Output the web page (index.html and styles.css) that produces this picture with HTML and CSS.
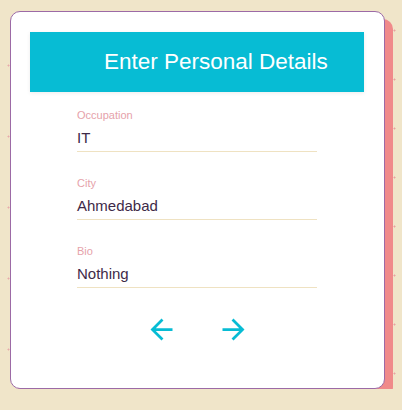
FILE: index.html
```html
<!DOCTYPE html>
<html lang="en">
<head>
<meta charset="utf-8">
<title>Enter Personal Details</title>
<link rel="stylesheet" href="styles.css">
</head>
<body>
<div class="card">
  <div class="header">Enter Personal Details</div>
  <div class="fields">
    <div class="field">
      <div class="label">Occupation</div>
      <div class="value">IT</div>
    </div>
    <div class="field">
      <div class="label">City</div>
      <div class="value">Ahmedabad</div>
    </div>
    <div class="field">
      <div class="label">Bio</div>
      <div class="value">Nothing</div>
    </div>
  </div>
  <div class="nav">
    <svg class="icon" viewBox="0 0 24 24"><path d="M20 11H7.83l5.59-5.59L12 4l-8 8 8 8 1.41-1.41L7.83 13H20v-2z"/></svg>
    <svg class="icon" viewBox="0 0 24 24"><path d="M12 4l-1.41 1.41L16.17 11H4v2h12.17l-5.58 5.59L12 20l8-8z"/></svg>
  </div>
</div>
</body>
</html>
```
FILE: styles.css
```css
html {
  background-color: #f0e5c9;
  background-image:
    radial-gradient(circle, #e8a0a0 0.8px, transparent 1.2px),
    radial-gradient(circle, #e8aaaa 0.8px, transparent 1.2px);
  background-size: 57px 49px, 83px 71px;
  background-position: 24px 6px, 50px 30px;
}
body {
  margin: 0;
  padding: 11px 0 0 10px;
  font-family: "Liberation Sans", Arial, sans-serif;
}
.card {
  box-sizing: border-box;
  width: 375px;
  height: 378px;
  background: #ffffff;
  border: 1px solid #9c6aa6;
  border-radius: 10px;
  box-shadow: 8px 8px 0 #f08a8a;
  padding: 20px 20px 0 19px;
  display: flex;
  flex-direction: column;
}
.header {
  height: 60px;
  line-height: 60px;
  background: #07bcd4;
  color: #ffffff;
  font-size: 22.5px;
  padding-left: 74px;
  box-shadow: 0 1px 4px rgba(0, 0, 0, 0.08);
}
.fields {
  width: 240px;
  align-self: center;
  display: flex;
  flex-direction: column;
  gap: 25px;
  padding-top: 17px;
}
.field {
  display: flex;
  flex-direction: column;
  gap: 7px;
  border-bottom: 1px solid #efe2c2;
  padding-bottom: 4px;
}
.label {
  font-size: 11px;
  line-height: 13px;
  color: #e6a2aa;
}
.value {
  font-size: 15px;
  line-height: 18px;
  color: #3e2a48;
}
.nav {
  display: flex;
  justify-content: center;
  gap: 39px;
  margin-top: 25px;
}
.icon {
  width: 33px;
  height: 33px;
  fill: #07bcd4;
}
```
